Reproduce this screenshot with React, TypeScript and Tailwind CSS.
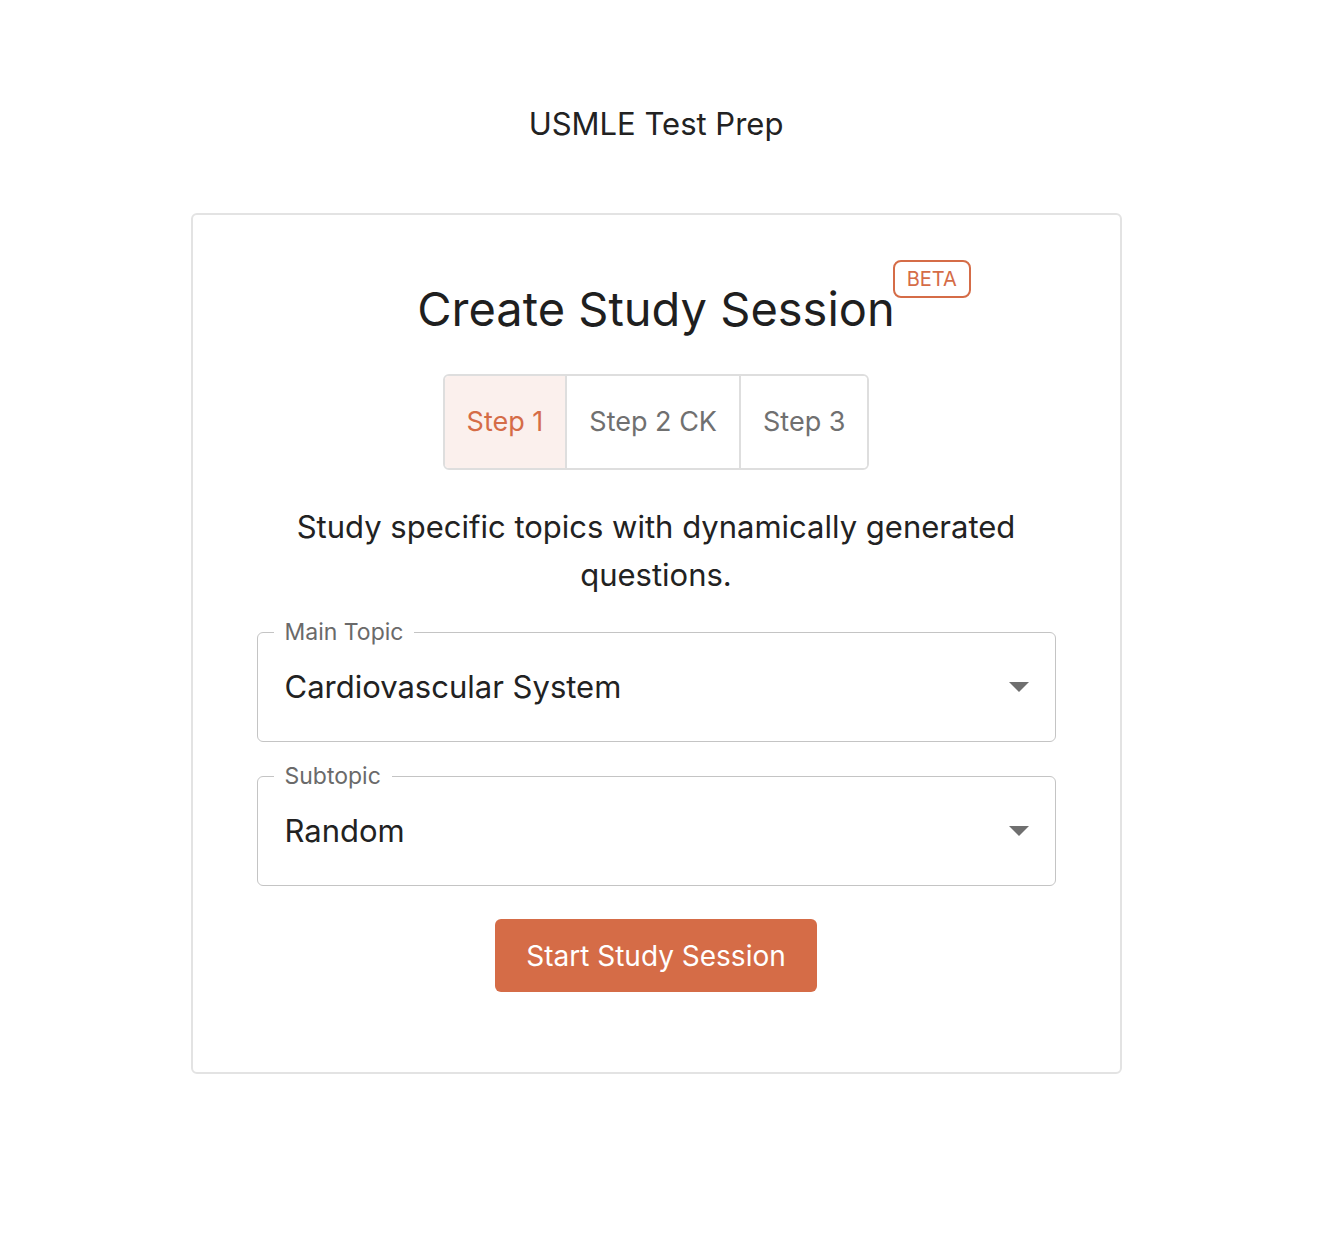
import React from 'react';

const steps = ['Step 1', 'Step 2 CK', 'Step 3'];

const Caret = () => (
  <svg width="20" height="10" viewBox="0 0 20 10" className="shrink-0">
    <path d="M0 0 L20 0 L10 10 Z" fill="#6f6f6f" />
  </svg>
);

const OutlinedSelect: React.FC<{ label: string; value: string }> = ({ label, value }) => (
  <div className="relative h-[110px] rounded-[6px] border border-[#c4c4c4] flex items-center justify-between pl-[27px] pr-[26px]">
    <span className="absolute left-[16px] top-[-15px] bg-white px-[11px] text-[23px] leading-[28px] text-[#6a6a6a]">
      {label}
    </span>
    <span className="text-[31px] text-[#222]">{value}</span>
    <Caret />
  </div>
);

export default function App() {
  const active = 0;

  return (
    <div className="min-h-[1260px] bg-white flex flex-col items-center pt-[104px] pr-[30px] font-['Inter',sans-serif] text-[#222]">
      <h1 className="text-[31px] leading-[40px]">USMLE Test Prep</h1>

      <div className="mt-[69px] w-[931px] rounded-[6px] border-2 border-[#e3e3e3] px-[64px] pt-[66px] pb-[80px] flex flex-col items-center">
        {/* heading + beta badge */}
        <div className="relative">
          <h2 className="text-[47px] leading-[56px] text-[#1f1f1f]">Create Study Session</h2>
          <span className="absolute left-[100%] top-[-21px] ml-[-2px] rounded-[8px] border-2 border-[#d56c47] px-[12px] text-[20px] leading-[34px] text-[#d56c47]">
            BETA
          </span>
        </div>

        {/* step toggle */}
        <div className="mt-[37px] flex h-[96px] rounded-[6px] border-2 border-[#dedede] overflow-hidden">
          {steps.map((s, i) => (
            <button
              key={s}
              className={
                'px-[22px] text-[27px] ' +
                (i > 0 ? 'border-l-2 border-[#dedede] ' : '') +
                (i === active ? 'bg-[#fbf0ed] text-[#d56c47]' : 'bg-white text-[#707070]')
              }
            >
              {s}
            </button>
          ))}
        </div>

        <p className="mt-[33px] max-w-[760px] text-center text-[31px] leading-[48px]">
          Study specific topics with dynamically generated questions.
        </p>

        <div className="mt-[33px] w-full flex flex-col gap-[34px]">
          <OutlinedSelect label="Main Topic" value="Cardiovascular System" />
          <OutlinedSelect label="Subtopic" value="Random" />
        </div>

        <button className="mt-[33px] h-[73px] w-[322px] rounded-[6px] bg-[#d56c47] text-white text-[28px]">
          Start Study Session
        </button>
      </div>
    </div>
  );
}
